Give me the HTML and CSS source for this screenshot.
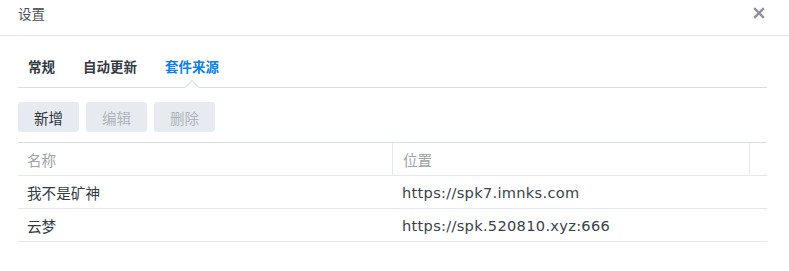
FILE: index.html
```html
<!DOCTYPE html>
<html lang="zh-CN">
<head>
<meta charset="utf-8">
<title>设置</title>
<link rel="stylesheet" href="styles.css">
</head>
<body>
<div class="dialog">
  <div class="header">
    <div class="title">设置</div>
    <div class="close" aria-label="关闭">
      <svg width="12" height="12" viewBox="0 0 12 12"><path d="M1.2 1.2 L10.8 10.8 M10.8 1.2 L1.2 10.8" stroke="#8c939b" stroke-width="2.4" stroke-linecap="butt" fill="none"/></svg>
    </div>
  </div>
  <div class="content">
    <div class="tabs">
      <div class="tab">常规</div>
      <div class="tab">自动更新</div>
      <div class="tab active">套件来源</div>
    </div>
    <div class="toolbar">
      <button class="btn">新增</button>
      <button class="btn disabled">编辑</button>
      <button class="btn disabled">删除</button>
    </div>
    <div class="grid">
      <div class="row head">
        <div class="cell c1">名称</div>
        <div class="cell c2">位置</div>
        <div class="cell c3"></div>
      </div>
      <div class="row">
        <div class="cell c1">我不是矿神</div>
        <div class="cell c2 url">https://spk7.imnks.com</div>
        <div class="cell c3"></div>
      </div>
      <div class="row">
        <div class="cell c1">云梦</div>
        <div class="cell c2 url">https://spk.520810.xyz:666</div>
        <div class="cell c3"></div>
      </div>
    </div>
  </div>
</div>
</body>
</html>
```
FILE: styles.css
```css
html, body {
  margin: 0;
  padding: 0;
  background: #ffffff;
}
body {
  font-family: "DejaVu Sans", "Noto Sans CJK SC", sans-serif;
  color: #333b44;
}
.dialog {
  width: 789px;
  height: 271px;
  overflow: hidden;
}
.header {
  height: 35px;
  border-bottom: 1px solid #e3e6ea;
  display: flex;
  justify-content: space-between;
  align-items: flex-start;
  padding: 0 24px 0 18px;
}
.title {
  font-family: "Noto Sans CJK SC", sans-serif;
  font-size: 13.5px;
  line-height: 26px;
  color: #46505a;
}
.close {
  width: 12px;
  height: 12px;
  margin-top: 7px;
  display: flex;
}
.content {
  padding: 0 22px 0 18px;
}
.tabs {
  display: flex;
  gap: 28px;
  padding: 0 0 11px 10px;
  margin-top: 20px;
  border-bottom: 1px solid #d7dee7;
}
.tab {
  font-family: "Noto Sans CJK SC", sans-serif;
  font-size: 13.5px;
  font-weight: 700;
  line-height: 20px;
  color: #323a43;
  position: relative;
}
.tab.active {
  color: #0a80e8;
}
.tab.active::after {
  content: "";
  position: absolute;
  left: 50%;
  bottom: -16px;
  width: 9px;
  height: 9px;
  margin-left: -5px;
  background: #ffffff;
  border-left: 1px solid #d7dee7;
  border-top: 1px solid #d7dee7;
  transform: rotate(45deg);
}
.toolbar {
  display: flex;
  gap: 7px;
  margin-top: 14px;
}
.btn {
  width: 61px;
  height: 30px;
  border: none;
  border-radius: 3px;
  background: #e7ebf1;
  font-family: "Noto Sans CJK SC", sans-serif;
  font-size: 14.5px;
  color: #2d353e;
  padding: 0;
}
.btn.disabled {
  color: #aeb4bb;
}
.grid {
  margin-top: 10px;
  border-top: 1px solid #d8dfe8;
}
.row {
  display: flex;
  height: 32px;
  border-bottom: 1px solid #e5e9ef;
}
.cell {
  display: flex;
  align-items: center;
  font-size: 14.6px;
  box-sizing: border-box;
}
.c1 {
  width: 374px;
  padding-left: 9px;
}
.c2 {
  width: 357px;
  padding-left: 10px;
}
.c3 {
  flex: 1;
}
.head .cell {
  color: #9ea4aa;
}
.head .c2,
.head .c3 {
  border-left: 1px solid #e5e9ef;
}
.url {
  letter-spacing: 0.3px;
  color: #39424b;
}
.row .c1 {
  font-family: "Noto Sans CJK SC", sans-serif;
}
```
